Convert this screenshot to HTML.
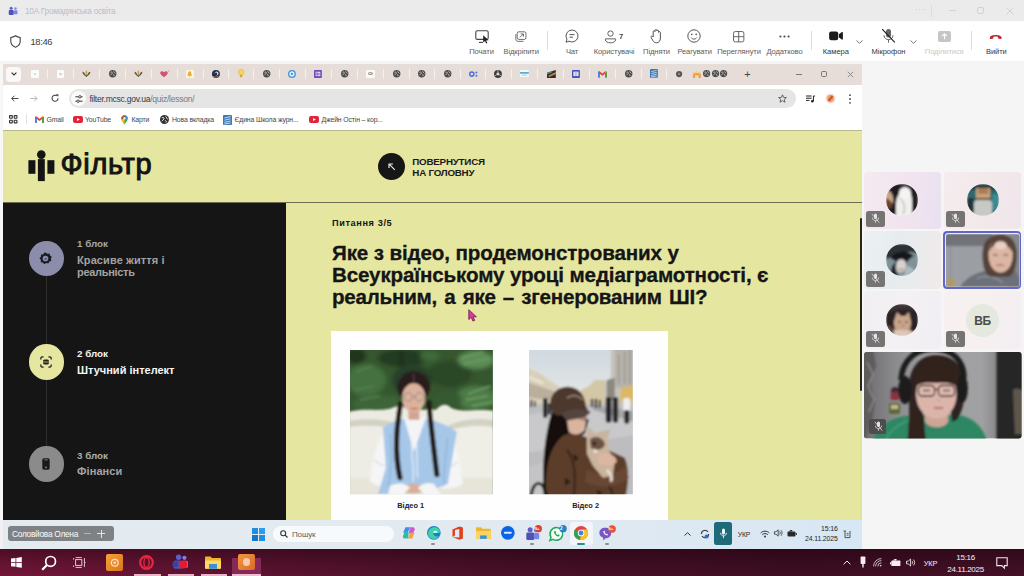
<!DOCTYPE html>
<html lang="uk">
<head>
<meta charset="utf-8">
<title>10А Громадянська освіта</title>
<style>
*{box-sizing:border-box;margin:0;padding:0}
html,body{width:1024px;height:576px;overflow:hidden;background:#f5f5f5;font-family:"Liberation Sans",sans-serif;}
div,svg,span{position:absolute}
span.i{position:static}
.c{transform:translate(-50%,-50%);white-space:nowrap}
.l{transform:translateY(-50%);white-space:nowrap}
.r{transform:translate(-100%,-50%);white-space:nowrap}
#titlebar{left:0;top:0;width:1024px;height:21px;background:#ebebeb}
#toolbar{left:0;top:21px;width:1024px;height:40px;background:#fff}
.tb{top:50.8px;font-size:7.6px;color:#5c5c5c;letter-spacing:-0.12px}
.tb2{top:50.9px;font-size:7.55px;color:#363636;letter-spacing:-0.05px}
.sep{width:1px;background:#dcdcdc;top:31px;height:19px}
.ic{overflow:visible}

.tile{width:77.5px;height:57.4px;border-radius:4px}
.mic{width:18.4px;height:15.8px;border-radius:2.5px;background:#767373}
.bm{top:119.4px;font-size:6.9px;color:#454545;letter-spacing:-0.15px}
.sb1{left:77px;font-size:9.8px;font-weight:700;letter-spacing:0px;margin-top:-0.4px}
.sb2{left:77px;font-size:11px;font-weight:700}
.hh{left:332px;font-size:20.6px;font-weight:700;color:#151515;letter-spacing:-0.25px;-webkit-text-stroke:0.3px #151515}
</style>
</head>
<body>
<!-- ===== Teams title bar ===== -->
<div id="titlebar"></div>
<svg class="ic" style="left:8px;top:6px" width="10.5" height="9.5" viewBox="0 0 14 12">
  <circle cx="4.2" cy="2.6" r="2" fill="#5b5fc7"/><circle cx="10" cy="3" r="1.6" fill="#7b83eb"/>
  <rect x="1" y="5" width="6.6" height="6.5" rx="1.2" fill="#4f52b2"/><rect x="8" y="5.2" width="4.6" height="5.6" rx="1.2" fill="#7b83eb"/>
</svg>
<div class="l" style="left:25px;top:11px;font-size:8.3px;color:#bcbccb;letter-spacing:-0.3px">10А Громадянська освіта</div>
<div class="c" style="left:920px;top:9px;font-size:10px;color:#d0d0d0;letter-spacing:0.5px">···</div>
<div style="left:931px;top:5px;width:1px;height:12px;background:#dcdcdc"></div>
<div style="left:949px;top:10px;width:7px;height:1px;background:#d2d2d2"></div>
<div style="left:977px;top:7px;width:7px;height:7px;border:1px solid #d2d2d2;border-radius:2px"></div>
<svg class="ic" style="left:1006px;top:7px" width="8" height="8" viewBox="0 0 8 8"><path d="M0.5 0.5L7.5 7.5M7.5 0.5L0.5 7.5" stroke="#d0d0d0" stroke-width="1" fill="none"/></svg>

<!-- ===== Teams toolbar ===== -->
<div id="toolbar"></div>
<svg class="ic" style="left:10px;top:35px" width="11" height="13" viewBox="0 0 11 13"><path d="M5.5 0.8C7 2 8.6 2.4 10.2 2.5V6.3C10.2 9.2 8.3 11.2 5.5 12.2C2.7 11.2 0.8 9.2 0.8 6.3V2.5C2.4 2.4 4 2 5.5 0.8Z" fill="none" stroke="#444" stroke-width="1.1"/></svg>
<div class="l" style="left:30.5px;top:41.2px;font-size:9.4px;color:#3a3a3a;letter-spacing:-0.35px">18:46</div>

<!-- Почати -->
<svg class="ic" style="left:475px;top:29.6px" width="15" height="14" viewBox="0 0 15 14"><rect x="0.8" y="0.8" width="12.4" height="8.6" rx="1.5" fill="none" stroke="#444" stroke-width="1.1"/><path d="M4 12.4H8" stroke="#444" stroke-width="1.1"/><path d="M8.2 5.2L13.6 10.2L11 10.4L12.4 13L11.2 13.5L10 10.9L8.2 12.4Z" fill="#222"/></svg>
<div class="tb c" style="left:481.5px">Почати</div>
<!-- Відкріпити -->
<svg class="ic" style="left:515.2px;top:30.8px" width="11.8" height="11.4" viewBox="0 0 14 13"><rect x="2.6" y="0.7" width="10.4" height="9" rx="2" fill="none" stroke="#555" stroke-width="1"/><path d="M1 3.5V9.5C1 11 2 12 3.5 12H10" fill="none" stroke="#555" stroke-width="1"/><path d="M6 7.2L9.8 3.4M6.8 3.2H10V6.4" fill="none" stroke="#555" stroke-width="1"/></svg>
<div class="tb c" style="left:521.2px">Відкріпити</div>
<div class="sep" style="left:547px"></div>
<!-- Чат -->
<svg class="ic" style="left:565px;top:29px" width="14" height="15" viewBox="0 0 14 15"><path d="M7 1A6 6 0 1 1 4 12.2L1 13.2L1.9 10.2A6 6 0 0 1 7 1Z" fill="none" stroke="#555" stroke-width="1"/><path d="M4.5 5.6H9.5M4.5 8.2H8" stroke="#555" stroke-width="1"/></svg>
<div class="tb c" style="left:572px">Чат</div>
<!-- Користувачі -->
<svg class="ic" style="left:604.4px;top:29.6px" width="13" height="14" viewBox="0 0 14 15"><circle cx="7" cy="3.8" r="2.9" fill="none" stroke="#555" stroke-width="1"/><path d="M1.5 9.5H12.5V10.5C12.5 12.5 10 13.8 7 13.8C4 13.8 1.5 12.5 1.5 10.5Z" fill="none" stroke="#555" stroke-width="1"/></svg>
<div class="c" style="left:621px;top:36px;font-size:7.6px;font-weight:700;color:#444">7</div>
<div class="tb c" style="left:614px">Користувачі</div>
<!-- Підняти -->
<svg class="ic" style="left:650px;top:28px" width="13" height="16" viewBox="0 0 13 16"><path d="M3.2 9V3.6C3.2 2.4 5 2.4 5 3.6V2.4C5 1.2 6.8 1.2 6.8 2.4V3C6.8 1.9 8.6 1.9 8.6 3V4.4C8.6 3.4 10.4 3.4 10.4 4.4V10C10.4 13 8.8 14.8 6.6 14.8C4.6 14.8 3.6 13.8 2.6 12.2L1 9.2C0.6 8.2 2 7.6 2.6 8.4Z" fill="none" stroke="#555" stroke-width="1"/></svg>
<div class="tb c" style="left:656.5px">Підняти</div>
<!-- Реагувати -->
<svg class="ic" style="left:687px;top:29px" width="14" height="14" viewBox="0 0 14 14"><circle cx="7" cy="7" r="6.2" fill="none" stroke="#555" stroke-width="1"/><circle cx="4.8" cy="5.4" r="0.8" fill="#555"/><circle cx="9.2" cy="5.4" r="0.8" fill="#555"/><path d="M4.2 8.6C5.6 10.6 8.4 10.6 9.8 8.6" fill="none" stroke="#555" stroke-width="1"/></svg>
<div class="tb c" style="left:694.6px">Реагувати</div>
<!-- Переглянути -->
<svg class="ic" style="left:733.2px;top:30.6px" width="11.4" height="11.4" viewBox="0 0 13 13"><rect x="0.6" y="0.6" width="11.8" height="11.8" rx="2" fill="none" stroke="#555" stroke-width="1"/><path d="M6.5 0.6V12.4M0.6 6.5H12.4" stroke="#555" stroke-width="1"/></svg>
<div class="tb c" style="left:739px">Переглянути</div>
<!-- Додатково -->
<svg class="ic" style="left:779px;top:34.9px" width="11" height="3" viewBox="0 0 11 3"><circle cx="1.4" cy="1.5" r="1.1" fill="#4a4a4a"/><circle cx="5.5" cy="1.5" r="1.1" fill="#4a4a4a"/><circle cx="9.6" cy="1.5" r="1.1" fill="#4a4a4a"/></svg>
<div class="tb c" style="left:784.5px">Додатково</div>
<div class="sep" style="left:811px"></div>
<!-- Камера -->
<svg class="ic" style="left:829.2px;top:31.2px" width="14.2" height="9.6" viewBox="0 0 16 11"><rect x="0" y="0.5" width="10.5" height="10" rx="2.5" fill="#1a1a1a"/><path d="M11.3 3.6L14.6 1.2C15.2 0.8 15.8 1.2 15.8 1.8V9.2C15.8 9.8 15.2 10.2 14.6 9.8L11.3 7.4Z" fill="#1a1a1a"/></svg>
<div class="tb2 c" style="left:835.8px">Камера</div>
<svg class="ic" style="left:856px;top:40px" width="7" height="4" viewBox="0 0 7 4"><path d="M0.5 0.5L3.5 3.3L6.5 0.5" fill="none" stroke="#666" stroke-width="0.9"/></svg>
<!-- Мікрофон -->
<svg class="ic" style="left:881px;top:28px" width="15" height="16" viewBox="0 0 15 16"><rect x="5" y="1" width="5" height="8.6" rx="2.5" fill="#666"/><path d="M3 7.2C3 10 5 11.6 7.5 11.6C10 11.6 12 10 12 7.2M7.5 11.6V14.6" fill="none" stroke="#666" stroke-width="1"/><path d="M1.2 1.2L13.8 14.4" stroke="#222" stroke-width="1.2"/></svg>
<div class="tb2 c" style="left:888.5px">Мікрофон</div>
<svg class="ic" style="left:910px;top:40px" width="7" height="4" viewBox="0 0 7 4"><path d="M0.5 0.5L3.5 3.3L6.5 0.5" fill="none" stroke="#666" stroke-width="0.9"/></svg>
<!-- Поділитися -->
<svg class="ic" style="left:938px;top:31px" width="13" height="11" viewBox="0 0 13 11"><rect x="0" y="0" width="13" height="11" rx="2" fill="#c6c6c6"/><path d="M6.5 8.3V3M4.2 5L6.5 2.8L8.8 5" fill="none" stroke="#fff" stroke-width="1.1"/></svg>
<div class="tb c" style="left:944.2px;color:#c8c8c8">Поділитися</div>
<div class="sep" style="left:971px"></div>
<!-- Вийти -->
<svg class="ic" style="left:989.4px;top:32.6px" width="13.4" height="6.8" viewBox="0 0 16 8"><path d="M1 5.2C1 1.2 15 1.2 15 5.2V6.4C15 7 14.5 7.3 14 7.2L11.6 6.7C11 6.6 10.8 6.2 10.8 5.7V4.6C9 3.9 7 3.9 5.2 4.6V5.7C5.2 6.2 5 6.6 4.4 6.7L2 7.2C1.5 7.3 1 7 1 6.4Z" fill="#c4262e"/></svg>
<div class="tb2 c" style="left:996.4px;font-size:7.5px">Вийти</div>

<!-- ===== Shared screen: Chrome window ===== -->
<div style="left:0;top:61px;width:862px;height:3px;background:#f5f5f5"></div>
<div style="left:0;top:64px;width:3px;height:484px;background:#f7f7f7"></div>
<div id="tabs" style="left:3px;top:64px;width:859px;height:21px;background:#e6ddd9"></div>
<div style="left:5.5px;top:66.5px;width:15.5px;height:15px;border-radius:4px;background:#fbf9f8"></div>
<svg class="ic" style="left:10.5px;top:72.2px" width="6" height="4" viewBox="0 0 6 4"><path d="M0.6 0.6L3 3L5.4 0.6" fill="none" stroke="#333" stroke-width="1.2"/></svg>
<div style="left:31.2px;top:69.8px;width:7.9px;height:7.9px;background:#fbfbfb;border-radius:1px"></div><div style="left:33.9px;top:72.5px;width:2.6px;height:2.6px;border-radius:2px;background:#c9d6d2"></div>
<div style="left:56.6px;top:69.8px;width:7.9px;height:7.9px;background:#fbfbfb;border-radius:1px"></div><div style="left:59.3px;top:72.5px;width:2.6px;height:2.6px;border-radius:2px;background:#c9d6d2"></div>
<svg class="ic" style="left:82.0px;top:70.3px" width="8.8" height="7.0" viewBox="0 0 10 8"><path d="M0.4 2C2 2.2 3.2 3.4 3.6 5L5 6L6.4 5C6.8 3.4 8 2.2 9.6 2C9.4 4.4 8 6 6.4 6.6L5 8L3.6 6.6C2 6 0.6 4.4 0.4 2Z" fill="#6b563a"/><path d="M5 0.2C6 1.4 6.2 3 5.8 4.6L5 5.4L4.2 4.6C3.8 3 4 1.4 5 0.2Z" fill="#c9a040"/><path d="M3.6 6L5 8L6.4 6L5 5.2Z" fill="#44705a"/></svg>
<svg class="ic" style="left:108.5px;top:70.1px" width="7.4" height="7.4" viewBox="0 0 10 10"><circle cx="5" cy="5" r="5" fill="#4a4a4a"/><path d="M2 3.2C3.4 2 4.8 3 4.4 4.4C4 5.8 2.4 5.6 2 7M6 1.4C7.6 2.4 7 4 8.6 4.6M5.4 6.4C6.6 6 7.6 7 6.8 8.4" stroke="#d8d8d8" stroke-width="1.1" fill="none"/></svg>
<svg class="ic" style="left:133.9px;top:70.3px" width="8.8" height="7.0" viewBox="0 0 10 8"><path d="M0.4 2C2 2.2 3.2 3.4 3.6 5L5 6L6.4 5C6.8 3.4 8 2.2 9.6 2C9.4 4.4 8 6 6.4 6.6L5 8L3.6 6.6C2 6 0.6 4.4 0.4 2Z" fill="#6b563a"/><path d="M5 0.2C6 1.4 6.2 3 5.8 4.6L5 5.4L4.2 4.6C3.8 3 4 1.4 5 0.2Z" fill="#c9a040"/><path d="M3.6 6L5 8L6.4 6L5 5.2Z" fill="#44705a"/></svg>
<svg class="ic" style="left:159.7px;top:70.3px" width="9.7" height="7.9" viewBox="0 0 11 9"><path d="M4.5 8.4C2 6.4 0.2 5 0.2 3.2C0.2 1.2 3 0.6 4.5 2.6C6 0.6 8.8 1.2 8.8 3.2C8.8 5 7 6.4 4.5 8.4Z" fill="#d4527a"/><circle cx="9.8" cy="1" r="0.8" fill="#e48aa6"/></svg>
<div style="left:186.0px;top:69.8px;width:7.9px;height:7.9px;background:#fdf6dc;border-radius:1px"></div><svg class="ic" style="left:187.4px;top:70.7px" width="5.3" height="6.2" viewBox="0 0 6 7"><path d="M3 0.2C4.4 0.2 4.8 1.6 4.8 3.2L5.8 5.4H0.2L1.2 3.2C1.2 1.6 1.6 0.2 3 0.2ZM2 6H4C4 7.2 2 7.2 2 6Z" fill="#e8a93a"/></svg>
<svg class="ic" style="left:212.0px;top:69.8px" width="7.9" height="7.9" viewBox="0 0 9 9"><circle cx="4.5" cy="4.5" r="4.5" fill="#1d2b4f"/><circle cx="5.2" cy="4" r="2.2" fill="#e8e8f0"/><circle cx="4.4" cy="4.6" r="1.7" fill="#1d2b4f"/><path d="M1 7C2.6 8.4 5.6 8.6 7.6 7" stroke="#d9892b" stroke-width="0.9" fill="none"/></svg>
<svg class="ic" style="left:237.9px;top:69.4px" width="6.2" height="8.8" viewBox="0 0 7 10"><circle cx="3.5" cy="3.5" r="3.2" fill="#f7d55a" stroke="#e0b432" stroke-width="0.6"/><rect x="2.2" y="6.6" width="2.6" height="2.8" rx="0.6" fill="#c9a84a"/></svg>
<svg class="ic" style="left:262.9px;top:70.1px" width="7.4" height="7.4" viewBox="0 0 10 10"><circle cx="5" cy="5" r="5" fill="#4a4a4a"/><path d="M2 3.2C3.4 2 4.8 3 4.4 4.4C4 5.8 2.4 5.6 2 7M6 1.4C7.6 2.4 7 4 8.6 4.6M5.4 6.4C6.6 6 7.6 7 6.8 8.4" stroke="#d8d8d8" stroke-width="1.1" fill="none"/></svg>
<svg class="ic" style="left:288.3px;top:69.8px" width="7.9" height="7.9" viewBox="0 0 9 9"><circle cx="4.5" cy="4.5" r="3.7" fill="#e8f3fb" stroke="#3b8fd6" stroke-width="1.5"/><circle cx="4.5" cy="4.5" r="1.3" fill="#3b8fd6"/></svg>
<svg class="ic" style="left:314.1px;top:69.8px" width="7.9" height="7.9" viewBox="0 0 9 9"><rect width="9" height="9" rx="1" fill="#7248b9"/><rect x="1.8" y="2" width="5.4" height="5" fill="#efe9fa"/><path d="M1.8 3.8H7.2M1.8 5.4H7.2M3.6 2V7" stroke="#7248b9" stroke-width="0.7"/></svg>
<svg class="ic" style="left:340.8px;top:70.1px" width="7.4" height="7.4" viewBox="0 0 10 10"><circle cx="5" cy="5" r="5" fill="#4a4a4a"/><path d="M2 3.2C3.4 2 4.8 3 4.4 4.4C4 5.8 2.4 5.6 2 7M6 1.4C7.6 2.4 7 4 8.6 4.6M5.4 6.4C6.6 6 7.6 7 6.8 8.4" stroke="#d8d8d8" stroke-width="1.1" fill="none"/></svg>
<div style="left:365.8px;top:69.8px;width:8.8px;height:7.9px;background:#fafaf5;border-radius:1px"></div><div style="left:367.6px;top:72.2px;width:5.3px;height:3.2px;border-radius:50%;border:0.9px solid #9a9a84;background:#e6e6d2"></div>
<svg class="ic" style="left:392.6px;top:70.1px" width="7.4" height="7.4" viewBox="0 0 10 10"><circle cx="5" cy="5" r="5" fill="#4a4a4a"/><path d="M2 3.2C3.4 2 4.8 3 4.4 4.4C4 5.8 2.4 5.6 2 7M6 1.4C7.6 2.4 7 4 8.6 4.6M5.4 6.4C6.6 6 7.6 7 6.8 8.4" stroke="#d8d8d8" stroke-width="1.1" fill="none"/></svg>
<svg class="ic" style="left:418.1px;top:70.1px" width="7.4" height="7.4" viewBox="0 0 10 10"><circle cx="5" cy="5" r="5" fill="#4a4a4a"/><path d="M2 3.2C3.4 2 4.8 3 4.4 4.4C4 5.8 2.4 5.6 2 7M6 1.4C7.6 2.4 7 4 8.6 4.6M5.4 6.4C6.6 6 7.6 7 6.8 8.4" stroke="#d8d8d8" stroke-width="1.1" fill="none"/></svg>
<svg class="ic" style="left:443.9px;top:70.1px" width="7.4" height="7.4" viewBox="0 0 10 10"><circle cx="5" cy="5" r="5" fill="#4a4a4a"/><path d="M2 3.2C3.4 2 4.8 3 4.4 4.4C4 5.8 2.4 5.6 2 7M6 1.4C7.6 2.4 7 4 8.6 4.6M5.4 6.4C6.6 6 7.6 7 6.8 8.4" stroke="#d8d8d8" stroke-width="1.1" fill="none"/></svg>
<svg class="ic" style="left:469.0px;top:70.7px" width="8.8" height="6.2" viewBox="0 0 10 7"><circle cx="3.2" cy="3.5" r="2.4" fill="none" stroke="#3f6fd8" stroke-width="1.6"/><circle cx="8.4" cy="1.6" r="1.1" fill="#3f6fd8"/><circle cx="8.4" cy="5.4" r="1.1" fill="#3f6fd8"/></svg>
<svg class="ic" style="left:494.3px;top:69.8px" width="7.9" height="7.9" viewBox="0 0 9 9"><circle cx="4.5" cy="4.5" r="4.5" fill="#3c3c3c"/><circle cx="4.5" cy="4.5" r="1.7" fill="#d9d9d9"/><path d="M4.5 0V2.8M0.6 6.8L3 5.4M8.4 6.8L6 5.4" stroke="#d9d9d9" stroke-width="0.8"/></svg>
<svg class="ic" style="left:520.2px;top:70.3px" width="8.8" height="7.0" viewBox="0 0 10 8"><rect width="10" height="8" rx="1" fill="#f2f8fb"/><rect x="0" y="2.4" width="10" height="1.8" fill="#4fa3c7"/><rect x="2" y="5.4" width="6" height="1" fill="#9cc9dc"/></svg>
<svg class="ic" style="left:546.6px;top:69.8px" width="8.8" height="7.9" viewBox="0 0 10 9"><path d="M0 3L10 0V9H0Z" fill="#2b2f33"/><path d="M2 6.4L10 2.4V4.6L2 8.2Z" fill="#d9822b"/><path d="M0 3.2L6 1.4L6 2.6L0 5Z" fill="#4f8f9b"/></svg>
<svg class="ic" style="left:572.2px;top:69.8px" width="7.9" height="7.9" viewBox="0 0 9 9"><rect width="9" height="9" rx="1" fill="#3f51b5"/><rect x="1.6" y="2" width="5.8" height="5" fill="#e8eaf6"/><rect x="1.6" y="2" width="5.8" height="1.6" fill="#c5cae9"/><path d="M4.5 3.6V7" stroke="#3f51b5" stroke-width="0.7"/></svg>
<svg class="ic" style="left:598.4px;top:70.8px" width="8.8" height="6.6" viewBox="0 0 10 7.5"><path d="M0 7.5V0.8L1.4 0L5 2.8L8.6 0L10 0.8V7.5H8V3.2L5 5.4L2 3.2V7.5Z" fill="#ea4335"/><path d="M0 7.5V0.8L2 2.2V7.5Z" fill="#4285f4"/><path d="M10 7.5V0.8L8 2.2V7.5Z" fill="#34a853"/><path d="M8 2.2L10 0.8L8.6 0Z" fill="#fbbc04"/></svg>
<svg class="ic" style="left:624.7px;top:70.1px" width="7.4" height="7.4" viewBox="0 0 10 10"><circle cx="5" cy="5" r="5" fill="#4a4a4a"/><path d="M2 3.2C3.4 2 4.8 3 4.4 4.4C4 5.8 2.4 5.6 2 7M6 1.4C7.6 2.4 7 4 8.6 4.6M5.4 6.4C6.6 6 7.6 7 6.8 8.4" stroke="#d8d8d8" stroke-width="1.1" fill="none"/></svg>
<svg class="ic" style="left:650.4px;top:69.4px" width="7.9" height="8.8" viewBox="0 0 9 10"><rect width="9" height="10" rx="1" fill="#3f78b5"/><path d="M1.4 3L7.6 1.6M1.4 5.2L7.6 3.8M1.4 7.4L7.6 6M1.4 9L7.6 8" stroke="#cfe2f3" stroke-width="0.9"/></svg>
<svg class="ic" style="left:675.8px;top:70.7px" width="6.2" height="6.2" viewBox="0 0 7 7"><circle cx="3.5" cy="3.5" r="3.5" fill="#555"/><circle cx="3.5" cy="3.5" r="1.4" fill="#8a8a8a"/></svg>
<div style="left:47.4px;top:69px;width:1px;height:10px;background:#f6f1ee"></div>
<div style="left:73.0px;top:69px;width:1px;height:10px;background:#f6f1ee"></div>
<div style="left:98.8px;top:69px;width:1px;height:10px;background:#f6f1ee"></div>
<div style="left:124.8px;top:69px;width:1px;height:10px;background:#f6f1ee"></div>
<div style="left:150.7px;top:69px;width:1px;height:10px;background:#f6f1ee"></div>
<div style="left:176.5px;top:69px;width:1px;height:10px;background:#f6f1ee"></div>
<div style="left:202.5px;top:69px;width:1px;height:10px;background:#f6f1ee"></div>
<div style="left:228.0px;top:69px;width:1px;height:10px;background:#f6f1ee"></div>
<div style="left:253.3px;top:69px;width:1px;height:10px;background:#f6f1ee"></div>
<div style="left:279.0px;top:69px;width:1px;height:10px;background:#f6f1ee"></div>
<div style="left:304.7px;top:69px;width:1px;height:10px;background:#f6f1ee"></div>
<div style="left:330.8px;top:69px;width:1px;height:10px;background:#f6f1ee"></div>
<div style="left:356.9px;top:69px;width:1px;height:10px;background:#f6f1ee"></div>
<div style="left:382.8px;top:69px;width:1px;height:10px;background:#f6f1ee"></div>
<div style="left:408.6px;top:69px;width:1px;height:10px;background:#f6f1ee"></div>
<div style="left:434.2px;top:69px;width:1px;height:10px;background:#f6f1ee"></div>
<div style="left:460.0px;top:69px;width:1px;height:10px;background:#f6f1ee"></div>
<div style="left:485.4px;top:69px;width:1px;height:10px;background:#f6f1ee"></div>
<div style="left:511.0px;top:69px;width:1px;height:10px;background:#f6f1ee"></div>
<div style="left:537.3px;top:69px;width:1px;height:10px;background:#f6f1ee"></div>
<div style="left:563.1px;top:69px;width:1px;height:10px;background:#f6f1ee"></div>
<div style="left:589.0px;top:69px;width:1px;height:10px;background:#f6f1ee"></div>
<div style="left:615.1px;top:69px;width:1px;height:10px;background:#f6f1ee"></div>
<div style="left:640.9px;top:69px;width:1px;height:10px;background:#f6f1ee"></div>
<div style="left:666.1px;top:69px;width:1px;height:10px;background:#f6f1ee"></div>
<svg class="ic" style="left:691.7px;top:69.6px" width="9.7" height="8.8" viewBox="0 0 11 10"><path d="M1 9V5C1 1 10 1 10 5V9H7.4V6H3.6V9Z" fill="#f0a03a"/><path d="M2 4.2C3 2.2 8 2.2 9 4.2" stroke="#fff3d6" stroke-width="0.8" fill="none"/></svg>
<svg class="ic" style="left:702.9px;top:70.2px" width="7.2" height="7.2" viewBox="0 0 10 10"><circle cx="5" cy="5" r="5" fill="#4a4a4a"/><path d="M2 3.2C3.4 2 4.8 3 4.4 4.4C4 5.8 2.4 5.6 2 7M6 1.4C7.6 2.4 7 4 8.6 4.6M5.4 6.4C6.6 6 7.6 7 6.8 8.4" stroke="#d8d8d8" stroke-width="1.1" fill="none"/></svg>
<svg class="ic" style="left:711.6px;top:70.2px" width="7.2" height="7.2" viewBox="0 0 10 10"><circle cx="5" cy="5" r="5" fill="#4a4a4a"/><path d="M2 3.2C3.4 2 4.8 3 4.4 4.4C4 5.8 2.4 5.6 2 7M6 1.4C7.6 2.4 7 4 8.6 4.6M5.4 6.4C6.6 6 7.6 7 6.8 8.4" stroke="#d8d8d8" stroke-width="1.1" fill="none"/></svg>
<svg class="ic" style="left:720.3px;top:70.2px" width="7.2" height="7.2" viewBox="0 0 10 10"><circle cx="5" cy="5" r="5" fill="#4a4a4a"/><path d="M2 3.2C3.4 2 4.8 3 4.4 4.4C4 5.8 2.4 5.6 2 7M6 1.4C7.6 2.4 7 4 8.6 4.6M5.4 6.4C6.6 6 7.6 7 6.8 8.4" stroke="#d8d8d8" stroke-width="1.1" fill="none"/></svg>
<div class="c" style="left:747.5px;top:73.5px;font-size:11px;color:#444">+</div>
<div style="left:796px;top:73.5px;width:6px;height:1px;background:#777"></div>
<div style="left:820.5px;top:71px;width:6px;height:6px;border:1px solid #777;border-radius:1.5px"></div>
<svg class="ic" style="left:846.5px;top:70.5px" width="7" height="7" viewBox="0 0 7 7"><path d="M0.8 0.8L6.2 6.2M6.2 0.8L0.8 6.2" stroke="#777" stroke-width="0.8" fill="none"/></svg>

<!-- address row -->
<div style="left:3px;top:85px;width:859px;height:45px;background:#fff;border-top-left-radius:4px"></div>
<svg class="ic" style="left:10.6px;top:95px" width="7.8" height="7" viewBox="0 0 9 8"><path d="M8.6 4H1M4 0.8L0.8 4L4 7.2" fill="none" stroke="#3c3c3c" stroke-width="1.1"/></svg>
<svg class="ic" style="left:30.4px;top:95px" width="7.8" height="7" viewBox="0 0 9 8"><path d="M0.4 4H8M5 0.8L8.2 4L5 7.2" fill="none" stroke="#b4b4b4" stroke-width="1.1"/></svg>
<svg class="ic" style="left:50.6px;top:94.2px" width="8.4" height="8.4" viewBox="0 0 10 10"><path d="M8.4 5A3.6 3.6 0 1 1 7 2.2" fill="none" stroke="#3c3c3c" stroke-width="1.2"/><path d="M5.8 0.4H8.8V3.4Z" fill="#3c3c3c"/></svg>
<div style="left:69px;top:89px;width:727px;height:18.5px;border-radius:9.5px;background:#e5e5e6"></div>
<div style="left:71px;top:91px;width:15px;height:14.5px;border-radius:7.5px;background:#fbfbfb"></div>
<svg class="ic" style="left:74.5px;top:94.5px" width="8" height="8" viewBox="0 0 8 8"><path d="M0.4 1.8H3.6M6.2 1.8H7.6M0.4 6.2H1.8M4.4 6.2H7.6" stroke="#333" stroke-width="1"/><circle cx="4.9" cy="1.8" r="1.2" fill="none" stroke="#333" stroke-width="0.9"/><circle cx="3.1" cy="6.2" r="1.2" fill="none" stroke="#333" stroke-width="0.9"/></svg>
<div class="l" id="url" style="left:89.5px;top:98.6px;font-size:8.6px;color:#3a3a3a;letter-spacing:-0.28px">filter.mcsc.gov.ua<span class="i" style="color:#7a7a7a">/quiz/lesson/</span></div>
<svg class="ic" style="left:777.5px;top:94px" width="9" height="9" viewBox="0 0 9 9"><path d="M4.5 0.8L5.6 3.4L8.4 3.6L6.3 5.4L7 8.2L4.5 6.7L2 8.2L2.7 5.4L0.6 3.6L3.4 3.4Z" fill="none" stroke="#444" stroke-width="0.8"/></svg>
<svg class="ic" style="left:805.5px;top:94.5px" width="9" height="8" viewBox="0 0 9 8"><path d="M0 1H5.6M0 3.2H5.6M0 5.4H3.4" stroke="#222" stroke-width="1"/><path d="M7.4 1V6" stroke="#222" stroke-width="1"/><circle cx="6.3" cy="6.2" r="1.3" fill="#222"/><path d="M7.4 1H9" stroke="#222" stroke-width="1"/></svg>
<svg class="ic" style="left:824.5px;top:93px" width="11" height="11" viewBox="0 0 11 11"><circle cx="5.5" cy="5.5" r="5" fill="#f7ddd0"/><circle cx="5.5" cy="5.5" r="3.4" fill="#ee9b6b"/><path d="M3.6 7.8L7.6 3" stroke="#d2521f" stroke-width="2"/></svg>
<svg class="ic" style="left:849px;top:94px" width="2" height="10" viewBox="0 0 2 10"><circle cx="1" cy="1.2" r="0.9" fill="#444"/><circle cx="1" cy="5" r="0.9" fill="#444"/><circle cx="1" cy="8.8" r="0.9" fill="#444"/></svg>

<!-- bookmarks row -->
<svg class="ic" style="left:8.5px;top:115px" width="8.5" height="8.5" viewBox="0 0 9 9"><rect x="0.6" y="0.6" width="2.9" height="2.9" rx="0.5" fill="none" stroke="#333" stroke-width="1.2"/><rect x="5.5" y="0.6" width="2.9" height="2.9" rx="0.5" fill="none" stroke="#333" stroke-width="1.2"/><rect x="0.6" y="5.5" width="2.9" height="2.9" rx="0.5" fill="none" stroke="#333" stroke-width="1.2"/><rect x="5.5" y="5.5" width="2.9" height="2.9" rx="0.5" fill="none" stroke="#333" stroke-width="1.2"/></svg>
<div style="left:25.5px;top:114px;width:1px;height:10px;background:#e2e2e2"></div>
<svg class="ic" style="left:34.5px;top:116px" width="9" height="7" viewBox="0 0 10 7.5"><path d="M0 7.5V0.8L1.4 0L5 2.8L8.6 0L10 0.8V7.5H8V3.2L5 5.4L2 3.2V7.5Z" fill="#ea4335"/><path d="M0 7.5V0.8L2 2.2V7.5Z" fill="#4285f4"/><path d="M10 7.5V0.8L8 2.2V7.5Z" fill="#34a853"/><path d="M8 2.2L10 0.8L8.6 0Z" fill="#fbbc04"/></svg>
<div class="bm l" style="left:46.5px">Gmail</div>
<svg class="ic" style="left:72.5px;top:116px" width="10" height="7" viewBox="0 0 10 7"><rect width="10" height="7" rx="2" fill="#e0243a"/><path d="M4 2L6.8 3.5L4 5Z" fill="#fff"/></svg>
<div class="bm l" style="left:85px">YouTube</div>
<svg class="ic" style="left:120.5px;top:114.5px" width="7" height="10" viewBox="0 0 7 10"><path d="M3.5 0.2C5.4 0.2 6.8 1.6 6.8 3.4C6.8 5.4 4.6 7 3.5 9.8C2.4 7 0.2 5.4 0.2 3.4C0.2 1.6 1.6 0.2 3.5 0.2Z" fill="#34a853"/><path d="M3.5 0.2C5.4 0.2 6.8 1.6 6.8 3.4L3.5 3.4Z" fill="#4285f4"/><path d="M0.2 3.4C0.2 1.6 1.6 0.2 3.5 0.2V3.4Z" fill="#ea4335"/><path d="M0.4 4.4L3.5 3.4L3.5 9.8C2.6 7.6 1 6.2 0.4 4.4Z" fill="#fbbc04"/><circle cx="3.5" cy="3.4" r="1.1" fill="#fff"/></svg>
<div class="bm l" style="left:131.5px">Карти</div>
<svg class="ic" style="left:160px;top:115px" width="9" height="9" viewBox="0 0 10 10"><circle cx="5" cy="5" r="5" fill="#333"/><path d="M2 3.2C3.4 2 4.8 3 4.4 4.4C4 5.8 2.4 5.6 2 7M6 1.4C7.6 2.4 7 4 8.6 4.6M5.4 6.4C6.6 6 7.6 7 6.8 8.4" stroke="#e4e4e4" stroke-width="1.1" fill="none"/></svg>
<div class="bm l" style="left:172px">Нова вкладка</div>
<svg class="ic" style="left:222.5px;top:114.5px" width="9" height="10" viewBox="0 0 9 10"><rect width="9" height="10" rx="1" fill="#3f78b5"/><path d="M1.4 3L7.6 1.6M1.4 5.2L7.6 3.8M1.4 7.4L7.6 6M1.4 9L7.6 8" stroke="#cfe2f3" stroke-width="0.9"/></svg>
<div class="bm l" style="left:234.5px">Єдина Школа журн...</div>
<svg class="ic" style="left:309px;top:116px" width="10" height="7" viewBox="0 0 10 7"><rect width="10" height="7" rx="2" fill="#e0243a"/><path d="M4 2L6.8 3.5L4 5Z" fill="#fff"/></svg>
<div class="bm l" style="left:321.5px">Джейн Остін – кор...</div>

<!-- ===== Web page ===== -->
<div id="page" style="left:3px;top:130px;width:859px;height:390.2px;background:#e5e6a0"></div>
<div style="left:3px;top:129.5px;width:859px;height:1px;background:#b9ba8c"></div>
<!-- logo -->
<svg class="ic" style="left:28.4px;top:150px" width="26.4" height="31.6" viewBox="0 0 26.4 31.6"><circle cx="13.3" cy="4.6" r="4.3" fill="#141414"/><rect x="9.9" y="9.1" width="6.9" height="22" fill="#141414"/><rect x="0.4" y="10.2" width="7" height="13.6" fill="#141414"/><rect x="19.4" y="10.2" width="7" height="13.6" fill="#141414"/></svg>
<div id="logo" class="l" style="left:60.6px;top:163.9px;font-size:29px;color:#141414;letter-spacing:0.65px;-webkit-text-stroke:1px #141414">Фільтр</div>
<!-- back button -->
<div style="left:378.2px;top:152.8px;width:27px;height:27px;border-radius:50%;background:#161616"></div>
<svg class="ic" style="left:388px;top:163px" width="7.5" height="7.5" viewBox="0 0 7.5 7.5"><path d="M6.8 6.8L1.2 1.2M1 5V1H5" fill="none" stroke="#e8e8e8" stroke-width="1.2"/></svg>
<div id="back1" class="l" style="left:412.3px;top:161px;font-size:9.8px;font-weight:700;color:#1a1a1a;letter-spacing:-0.24px">ПОВЕРНУТИСЯ</div>
<div id="back2" class="l" style="left:412.3px;top:171.7px;font-size:9.8px;font-weight:700;color:#1a1a1a;letter-spacing:-0.24px">НА ГОЛОВНУ</div>
<!-- header line -->
<div style="left:3px;top:202px;width:859px;height:1px;background:#6d6d52"></div>
<!-- sidebar -->
<div id="side" style="left:3px;top:202.6px;width:283px;height:317.5px;background:#151515"></div>
<div style="left:45.8px;top:275px;width:1px;height:173px;background:#2d2d2d"></div>
<div style="left:28.6px;top:240.8px;width:35.3px;height:35.3px;border-radius:50%;background:#8b8dab"></div>
<svg class="ic" style="left:39.4px;top:251.9px" width="13" height="13" viewBox="0 0 12 12"><path d="M6 0.4L7.6 1.6L9.6 1.4L10.2 3.2L11.8 4.4L11 6.2L11.4 8.2L9.6 8.8L8.6 10.6L6.6 10.2L4.8 11.4L3.6 9.8L1.6 9.4L1.8 7.4L0.4 5.8L1.8 4.4L1.8 2.4L3.8 2.2L4.8 0.6Z" fill="#1b1b24"/><circle cx="6" cy="6" r="2.6" fill="#8b8dab"/><path d="M5 7L5.6 5.4L6.4 6.2L7 5.2L7.2 7Z" fill="#3a3a4a"/></svg>
<div class="sb1 l" style="top:243.6px;color:#a6a6a6">1 блок</div>
<div class="sb2 l" id="s1a" style="letter-spacing:0.1px;top:260.2px;color:#a3a3a3">Красиве життя і</div>
<div class="sb2 l" id="s1b" style="letter-spacing:-0.3px;top:272px;color:#a3a3a3">реальність</div>
<div style="left:28.6px;top:344.4px;width:35.3px;height:35.3px;border-radius:50%;background:#e5e6a0"></div>
<svg class="ic" style="left:40.2px;top:356px" width="12" height="12" viewBox="0 0 12 12"><path d="M0.8 3.6V2.4C0.8 1.4 1.4 0.8 2.4 0.8H3.6M8.4 0.8H9.6C10.6 0.8 11.2 1.4 11.2 2.4V3.6M11.2 8.4V9.6C11.2 10.6 10.6 11.2 9.6 11.2H8.4M3.6 11.2H2.4C1.4 11.2 0.8 10.6 0.8 9.6V8.4" fill="none" stroke="#222" stroke-width="1.3"/><rect x="3" y="3.6" width="6" height="4.8" rx="1.6" fill="#222"/><path d="M3 6H9" stroke="#e5e69d" stroke-width="0.7"/></svg>
<div class="sb1 l" style="top:353.8px;color:#f4f4f4">2 блок</div>
<div class="sb2 l" id="s2" style="letter-spacing:0px;top:369.8px;color:#f6f6f6">Штучний інтелект</div>
<div style="left:28.6px;top:446.4px;width:35.3px;height:35.3px;border-radius:50%;background:#8b8b8b"></div>
<svg class="ic" style="left:42.2px;top:458px" width="8" height="12" viewBox="0 0 8 12"><rect x="0.3" y="0.3" width="7.4" height="11.4" rx="1.6" fill="#1a1a1a"/><rect x="2.4" y="1.4" width="3.2" height="0.9" fill="#8b8b8b"/><circle cx="4" cy="9.4" r="0.9" fill="#8b8b8b"/></svg>
<div class="sb1 l" style="top:455.3px;color:#adadad">3 блок</div>
<div class="sb2 l" id="s3" style="letter-spacing:0.1px;top:471.3px;color:#a4a4a4">Фінанси</div>
<!-- question -->
<div id="q" class="l" style="left:332px;top:222.6px;font-size:9.2px;font-weight:700;color:#161616;letter-spacing:0.6px">Питання 3/5</div>
<div class="hh l" id="h1" style="top:253px;letter-spacing:-0.13px">Яке з відео, продемонстрованих у</div>
<div class="hh l" id="h2" style="top:275px;letter-spacing:-0.14px">Всеукраїнському уроці медіаграмотності, є</div>
<div class="hh l" id="h3" style="top:297px;word-spacing:1.73px">реальним, а яке – згенерованим ШІ?</div>
<!-- mouse cursor -->
<svg class="ic" style="left:467.6px;top:309px" width="9.4" height="13" viewBox="0 0 10 14"><path d="M0.8 0.8V11.4L3.4 9L5.2 13L7.2 12.2L5.4 8.4H9Z" fill="#d63aa6" stroke="#6a1045" stroke-width="0.8"/></svg>
<!-- card -->
<div id="card" style="left:331px;top:331px;width:336.5px;height:189.2px;background:#fefefe"></div>
<!-- photo 1 -->
<svg class="ic" style="left:349.8px;top:349.8px" width="142.8" height="144.2" viewBox="0 0 143 144.5">
  <defs>
    <filter id="b1" x="-5%" y="-5%" width="110%" height="110%"><feGaussianBlur stdDeviation="0.9"/></filter>
    <filter id="b2" x="-10%" y="-10%" width="120%" height="120%"><feGaussianBlur stdDeviation="2"/></filter>
    <filter id="b3" x="-10%" y="-10%" width="120%" height="120%"><feGaussianBlur stdDeviation="1.2"/></filter>
    <clipPath id="cp1"><rect width="143" height="144.5"/></clipPath>
  </defs>
  <g clip-path="url(#cp1)">
    <rect width="143" height="144.5" fill="#35562f"/>
    <g filter="url(#b2)"><rect x="-10" y="-10" width="163" height="90" fill="#35562f"/>
      <ellipse cx="16" cy="30" rx="20" ry="16" fill="#44703f"/><ellipse cx="52" cy="8" rx="24" ry="9" fill="#243a20"/>
      <ellipse cx="100" cy="24" rx="22" ry="13" fill="#2b4628"/><ellipse cx="126" cy="48" rx="20" ry="12" fill="#4d7c46"/>
      <ellipse cx="126" cy="10" rx="18" ry="9" fill="#5c8d55"/><ellipse cx="28" cy="54" rx="26" ry="9" fill="#3d6539"/>
      <ellipse cx="98" cy="50" rx="14" ry="9" fill="#365a33"/><rect x="50" y="0" width="3" height="26" fill="#1d2a18"/>
      <ellipse cx="6" cy="6" rx="10" ry="8" fill="#22361e"/><ellipse cx="80" cy="6" rx="10" ry="5" fill="#3f6a3a"/>
      <ellipse cx="62" cy="30" rx="20" ry="16" fill="#27402a"/>
    </g>
    <g filter="url(#b3)">
      <path d="M112 8L134 2M114 14L140 8M118 44L141 36M116 50L138 46M122 56L143 52" stroke="#6a9a63" stroke-width="2.6" fill="none" opacity="0.75"/>
      <path d="M6 22L22 16M4 40L24 36M10 50L30 46" stroke="#527f4c" stroke-width="2.6" fill="none" opacity="0.7"/>
    </g>
    <g filter="url(#b1)">
      <!-- sofa -->
      <path d="M-8 64C10 57 25 62 40 59C48 55 54 56 60 60H86C91 54 97 53 101 58C112 64 128 57 151 62V152H-8Z" fill="#ecebe2"/>
      <path d="M-8 72C16 67 36 70 50 74L52 80C36 76 16 74 -8 78Z" fill="#d3d1c4"/><path d="M151 72C128 66 110 70 98 76L96 82C110 76 128 74 151 78Z" fill="#d3d1c4"/>
      <path d="M-8 80C20 74 40 78 50 82V152H-8Z" fill="#eeede5"/><path d="M151 80C125 74 108 78 96 84V152H151Z" fill="#efeee7"/>
      <path d="M-8 128H151V152H-8Z" fill="#e7e5da"/>
      <!-- shirt / sleeves -->
      <path d="M40 78C28 84 22 110 20 132C30 138 40 140 52 136L58 96Z" fill="#f5f5f7"/>
      <path d="M92 78C106 84 110 112 113 134C104 140 92 140 82 136L76 96Z" fill="#f5f5f7"/>
      <path d="M24 110C30 116 38 118 44 116M108 112C102 118 94 120 88 118" stroke="#d9dbe2" stroke-width="1.2" fill="none"/>
      <!-- vest -->
      <path d="M33 78C42 71 54 68 64 68C78 68 92 72 107 82L98 134C86 142 44 144.5 28 144.5L36 118Z" fill="#a6c7e8"/>
      <path d="M40 84C42 100 42 120 38 138M98 88C96 104 94 120 94 134" stroke="#8fb4da" stroke-width="1.4" fill="none"/>
      <path d="M54 68L64 102L76 68Z" fill="#f4f4f6"/>
      <path d="M62 90C61 110 65 120 63 132M66 90C68 104 66 116 68 128" stroke="#eef2f8" stroke-width="1.2" fill="none"/>
      <!-- neck & head -->
      <rect x="58.5" y="56" width="11" height="14" fill="#d2a48f"/>
      <ellipse cx="63.8" cy="37" rx="16" ry="15.5" fill="#2a1f1e"/>
      <ellipse cx="63.8" cy="48" rx="11.6" ry="14.6" fill="#dcb29c"/>
      <path d="M49.5 45C50 30 58 25.5 63.8 25.5C70 25.5 77.5 30 78.5 45C75 36 69 32 63.8 32C58 32 53 36 49.5 45Z" fill="#2a1f1e"/>
      <path d="M63.8 24V32" stroke="#6d5a56" stroke-width="0.7"/>
      <circle cx="58.4" cy="47" r="4.2" fill="none" stroke="#857c86" stroke-width="0.9"/><circle cx="69.6" cy="47" r="4.2" fill="none" stroke="#857c86" stroke-width="0.9"/><path d="M62.6 47H65.4" stroke="#857c86" stroke-width="0.7"/>
      <path d="M60.6 58C62.6 59.2 65.6 59.2 67.6 58" stroke="#b2635b" stroke-width="1.3" fill="none"/>
      <!-- braids -->
      <path d="M50.5 54C47 76 44 100 50 128" stroke="#241a19" stroke-width="5.2" fill="none" stroke-linecap="round"/>
      <path d="M79 53C81 76 84 100 87 125" stroke="#241a19" stroke-width="5.2" fill="none" stroke-linecap="round"/>
      <!-- hands -->
      <ellipse cx="63" cy="139" rx="12" ry="5" fill="#d9ae98"/>
      <path d="M40 136C50 132 56 134 60 138L52 146H38Z" fill="#f5f5f7"/><path d="M84 134C78 132 72 134 68 138L76 146H92Z" fill="#f5f5f7"/>
    </g>
  </g>
</svg>
<!-- photo 2 -->
<svg class="ic" style="left:529.4px;top:349.8px" width="103.7" height="144.2" viewBox="0 0 104 144.5">
  <defs><clipPath id="cp2"><rect width="104" height="144.5"/></clipPath><linearGradient id="sky" x1="0" y1="0" x2="0" y2="1"><stop offset="0" stop-color="#cdd7df"/><stop offset="1" stop-color="#e6e8e6"/></linearGradient></defs>
  <g clip-path="url(#cp2)">
    <rect width="104" height="144.5" fill="#bcbcbd"/>
    <g filter="url(#b1)">
      <rect x="-8" y="-8" width="120" height="160" fill="#bcbcbd"/><rect x="-8" y="-8" width="120" height="62" fill="url(#sky)"/>
      <path d="M-8 15L12 24L20 30L32 38V56H-8Z" fill="#d8cfb9"/><path d="M-8 30L30 43V52L-8 46Z" fill="#b9af9c"/><path d="M-8 24L14 33" stroke="#efe9d8" stroke-width="2"/>
      <path d="M52 40L60 36L66 30H76V56H52Z" fill="#d3c8a6"/>
      <path d="M112 -8H82V28L76 32V56H112Z" fill="#c6c3ba"/>
      <path d="M86 -8H112V38H86Z" fill="#b7b4ad"/><path d="M90 4V34M96 2V34M101 0V34" stroke="#9b9892" stroke-width="1.6"/>
      <path d="M92 38L112 34V52H92Z" fill="#dcb865"/><path d="M78 30L86 28V50H78Z" fill="#8b8880"/>
      <path d="M-8 54H112V152H-8Z" fill="#bdbdbf"/>
      <path d="M-8 66L44 58L112 62V84L-8 104Z" fill="#c9c9cb"/>
      <path d="M64 56L112 62V74L64 60Z" fill="#a7a6a6"/>
      <path d="M-8 120L30 108V152H-8Z" fill="#c4c4c6"/>
      <!-- background people -->
      <rect x="14" y="48" width="4.6" height="20" rx="2.2" fill="#26262a"/><rect x="19" y="53" width="3" height="12" rx="1.5" fill="#38383c"/>
      <rect x="1" y="50" width="2.4" height="7" fill="#55504c"/><rect x="5" y="51" width="2" height="6" fill="#5c5652"/>
      <rect x="77" y="47" width="5.6" height="26" rx="2.4" fill="#232327"/><rect x="84" y="47" width="5.4" height="26" rx="2.4" fill="#29272b"/>
      <rect x="94.5" y="48" width="7" height="14" rx="2.4" fill="#efeeed"/><rect x="95.6" y="60" width="5" height="14" rx="2" fill="#28282c"/>
      <rect x="62" y="49" width="2.4" height="8" fill="#45423f"/><rect x="66" y="49" width="2.4" height="9" fill="#3c3a38"/><rect x="70" y="50" width="2.2" height="8" fill="#4a4744"/>
      <!-- hair -->
      <path d="M24 58C17 80 12 110 15 152H34L42 90L56 84L60 70L36 60Z" fill="#16110f"/>
      <!-- coat -->
      <path d="M34 86C46 80 58 86 70 96L96 108C101 120 100 134 96 152H18C15 124 18 100 34 86Z" fill="#5c3e2c"/>
      <path d="M38 100C46 110 48 128 44 152M68 122C78 130 84 140 86 152" stroke="#3d281d" stroke-width="2.5" fill="none"/>
      <path d="M58 120C70 126 86 128 97 116L100 128C88 140 70 138 56 132Z" fill="#694735"/>
      <path d="M44 104L50 108L46 112ZM36 128L42 132L36 136ZM68 140L74 143L69 147Z" fill="#2b1c15"/>
      <!-- face -->
      <path d="M37 64C44 62 54 62 58 66L56 80C52 86 44 86 40 82Z" fill="#d9b49f"/>
      <path d="M37 64C44 62 54 62 58 66L57 72C50 68 42 68 38 72Z" fill="#a07f6e"/>
      <!-- cap -->
      <path d="M21 56C21 42 31 36 41 37C51 38 56 46 57 56L60 62C50 60 40 62 30 66C25 64 21 62 21 56Z" fill="#4e372d"/>
      <path d="M32 64C42 58 54 58 62 62C58 69 46 69 38 71Z" fill="#54453f"/>
      <path d="M38 48C44 44 50 46 54 50" stroke="#a99282" stroke-width="1.2" fill="none"/>
      <!-- dog -->
      <path d="M58 84L60 77L66 84L74 81L82 80L78 90L80 100L86 112L84 126L74 128L64 116L58 104Z" fill="#c9b49d"/>
      <path d="M61 90C65 85 74 87 76 94C76 100 66 102 62 98Z" fill="#6b5343"/><circle cx="65.6" cy="93.6" r="1.7" fill="#111"/><path d="M64 99L70 101L66 104Z" fill="#efe6dc"/>
      <path d="M70 104C78 101 88 106 88 112C83 118 72 117 68 112Z" fill="#dcb6a0"/>
      <path d="M78 120C82 124 84 128 82 132" stroke="#e6dccf" stroke-width="3" fill="none"/>
      <!-- bag strap -->
      <path d="M2 152C2 136 8 130 14 136L20 152" stroke="#141414" stroke-width="3" fill="none"/>
    </g>
  </g>
</svg>
<div class="c" style="left:410.7px;top:504.6px;font-size:7.4px;font-weight:700;color:#1c1c1c">Відео 1</div>
<div class="c" style="left:585.6px;top:504.6px;font-size:7.4px;font-weight:700;color:#1c1c1c">Відео 2</div>
<!-- page scrollbar -->
<div style="left:859.6px;top:202.6px;width:2.4px;height:317.5px;background:#e1e29a"></div>
<div style="left:860px;top:218px;width:1.8px;height:173px;background:#26261c;border-radius:1px"></div>

<!-- ===== Windows 11 taskbar (inside shared screen) ===== -->
<div style="left:0;top:520.1px;width:862px;height:29.4px;background:#f1eff1"></div><div style="left:3px;top:520.1px;width:859px;height:28.5px;background:linear-gradient(90deg,#e4ebf0 0%,#e2eaf1 60%,#d7e7f4 100%)"></div>
<div style="left:8.2px;top:525.5px;width:105.6px;height:15.7px;border-radius:3px;background:#7f8284"></div>
<div class="l" id="nm" style="left:12px;top:533.8px;font-size:8.4px;color:#fafafa;letter-spacing:-0.3px">Соловйова Олена</div>
<div style="left:84px;top:533px;width:7px;height:1px;background:#b4b4b4"></div>
<div style="left:97px;top:533px;width:8px;height:1px;background:#e6e6e6"></div><div style="left:100.5px;top:529.5px;width:1px;height:8px;background:#e6e6e6"></div>
<svg class="ic" style="left:251.5px;top:527.5px" width="13" height="13" viewBox="0 0 13 13"><rect x="0" y="0" width="6" height="6" fill="#1e8fe0"/><rect x="7" y="0" width="6" height="6" fill="#2a9df0"/><rect x="0" y="7" width="6" height="6" fill="#1577c8"/><rect x="7" y="7" width="6" height="6" fill="#1e8fe0"/></svg>
<div style="left:273.2px;top:525.6px;width:121.2px;height:16.4px;border-radius:8.2px;background:#f7fafd"></div>
<svg class="ic" style="left:279.5px;top:530px" width="8" height="8" viewBox="0 0 8 8"><circle cx="3.2" cy="3.2" r="2.5" fill="none" stroke="#333" stroke-width="1.1"/><path d="M5.1 5.1L7.5 7.5" stroke="#333" stroke-width="1.2"/></svg>
<div class="l" style="left:292px;top:534px;font-size:8px;color:#5c5c5c;letter-spacing:-0.15px">Пошук</div>
<!-- copilot -->
<svg class="ic" style="left:402.2px;top:526.3px" width="13.7" height="13.7" viewBox="0 0 12 12"><path d="M3 1H7L5 6H1Z" fill="#3a8fe8"/><path d="M7 1H9.6C11 1 11.6 2.4 11 3.6L9 8L6 6Z" fill="#c95ad0"/><path d="M9 11H5L7 6H11Z" fill="#f0a43a"/><path d="M5 11H2.4C1 11 0.4 9.6 1 8.4L3 4L6 6Z" fill="#2fb9a8"/></svg>
<!-- edge -->
<svg class="ic" style="left:426.6px;top:526.3px" width="13.7" height="13.7" viewBox="0 0 12 12"><circle cx="6" cy="6" r="6" fill="#1b7fd1"/><path d="M1 7C1 3 4 1 7 1.2C10 1.6 11.6 4 11.6 6H5.4C5.4 8.6 8 10 10.6 8.8C9 11.4 6 12.2 3.4 10.8C1.8 9.8 1 8.4 1 7Z" fill="#3fd1a8"/><path d="M5.4 6C5.4 4.6 6.6 4 7.6 4.2C9 4.4 9.4 6 9.4 6Z" fill="#f4f8fb"/></svg>
<div style="left:431.4px;top:543.2px;width:4px;height:1.4px;border-radius:1px;background:#8a8f94"></div>
<!-- office -->
<svg class="ic" style="left:451.9px;top:525.8px" width="11.4" height="14.2" viewBox="0 0 10 12.5"><path d="M0.4 3L6.4 0.4L9.6 1.4V11.1L6.4 12.1L0.4 9.6L6.4 10.2V2.6L2.6 3.6V8.4L0.4 9.6Z" fill="#e2401c"/></svg>
<!-- folder -->
<svg class="ic" style="left:475.6px;top:527.4px" width="14.8" height="12.0" viewBox="0 0 13 10.5"><path d="M0 1.2C0 0.6 0.4 0.2 1 0.2H4.4L5.8 1.6H12C12.6 1.6 13 2 13 2.6V9.4C13 10 12.6 10.4 12 10.4H1C0.4 10.4 0 10 0 9.4Z" fill="#f2b52d"/><rect x="0" y="3.6" width="13" height="6.8" rx="0.8" fill="#fad565"/><rect x="3.6" y="7.4" width="5.8" height="3" fill="#3a8fd8"/></svg>
<!-- zoom -->
<svg class="ic" style="left:500.8px;top:526.3px" width="13.7" height="13.7" viewBox="0 0 12 12"><circle cx="6" cy="6" r="6" fill="#0b63e6"/><rect x="2.6" y="5" width="6.8" height="1.8" rx="0.6" fill="#dbe8fc"/></svg>
<!-- teams -->
<svg class="ic" style="left:523.9px;top:525.1px" width="18.2" height="16.0" viewBox="0 0 16 14"><circle cx="5.4" cy="4.2" r="2.2" fill="#5b5fc7"/><circle cx="10.4" cy="4.8" r="1.7" fill="#7b83eb"/><rect x="2" y="6.6" width="7" height="6.6" rx="1.2" fill="#4f52b2"/><rect x="8.6" y="7" width="4.8" height="5.6" rx="1.2" fill="#7b83eb"/><circle cx="12.6" cy="3.2" r="3.2" fill="#d9412f"/></svg>
<div style="left:530.4px;top:543.2px;width:4px;height:1.4px;border-radius:1px;background:#8a8f94"></div>
<!-- whatsapp -->
<svg class="ic" style="left:548.9px;top:524.7px" width="18.2" height="17.1" viewBox="0 0 16 15"><path d="M6.4 2.2A5.6 5.6 0 1 1 3.6 12.6L0.8 13.6L1.8 10.8A5.6 5.6 0 0 1 6.4 2.2Z" fill="#f6fbf8" stroke="#1fa855" stroke-width="1.3"/><path d="M4.4 5.6C4.4 8 6.6 10 8.8 10.2L9.4 9L8.2 8.2L7.6 8.8C6.8 8.4 6.2 7.8 5.8 7L6.4 6.4L5.6 5.2Z" fill="#1fa855"/><circle cx="12.4" cy="3.2" r="3.2" fill="#2a7fc8"/></svg>
<!-- chrome -->
<div style="left:570.4px;top:522.4px;width:22.4px;height:23px;border-radius:3px;background:#f2f6fa"></div>
<svg class="ic" style="left:573.7px;top:526.2px" width="14.1" height="14.1" viewBox="0 0 12 12"><circle cx="6" cy="6" r="6" fill="#e7453c"/><path d="M6 6L0.8 3A6 6 0 0 0 5.2 11.95Z" fill="#2ea44f"/><path d="M6 6L5.2 11.95A6 6 0 0 0 11.2 3H6Z" fill="#f7c325"/><circle cx="6" cy="6" r="2.8" fill="#fff"/><circle cx="6" cy="6" r="2.1" fill="#3f82ea"/></svg>
<div style="left:576.6px;top:543px;width:8.4px;height:1.8px;border-radius:1px;background:#2c8f88"></div>
<!-- viber -->
<svg class="ic" style="left:597.9px;top:524.7px" width="18.2" height="17.1" viewBox="0 0 16 15"><path d="M6.4 2.4C9.6 2.4 11.6 4.2 11.6 7C11.6 9.8 9.6 11.6 6.8 11.6L4.6 13.6V11.2C2.6 10.6 1.2 9.2 1.2 7C1.2 4.2 3.2 2.4 6.4 2.4Z" fill="#7a57c7"/><path d="M4.6 5.2C4.6 7.4 6.2 9 8.4 9.2L8.8 8.2L7.8 7.6L7.4 8C6.8 7.8 6.2 7.2 5.9 6.6L6.4 6.2L5.8 5Z" fill="#f3eefc"/><circle cx="12.4" cy="3.4" r="3.3" fill="#e8523c"/></svg>
<div style="left:605px;top:543.2px;width:4px;height:1.4px;border-radius:1px;background:#8a8f94"></div>
<div class="c" style="left:537.2px;top:528.2px;font-size:4.4px;font-weight:700;color:#fff">9+</div>
<div class="c" style="left:561.4px;top:527.6px;font-size:4.6px;font-weight:700;color:#fff">2</div>
<div class="c" style="left:610.8px;top:528.2px;font-size:4.4px;font-weight:700;color:#fff">9+</div>
<!-- win11 tray -->
<svg class="ic" style="left:683.6px;top:531.6px" width="7" height="4" viewBox="0 0 7 4"><path d="M0.5 3.5L3.5 0.7L6.5 3.5" fill="none" stroke="#333" stroke-width="1"/></svg>
<svg class="ic" style="left:699.5px;top:528.5px" width="10" height="10" viewBox="0 0 10 10"><path d="M1.4 5A3.6 3.6 0 0 1 8 3M8.6 5A3.6 3.6 0 0 1 2 7" fill="none" stroke="#444" stroke-width="1.2"/><circle cx="6.6" cy="7.4" r="2" fill="#2a6fd0"/></svg>
<div style="left:714.2px;top:522.4px;width:17.8px;height:22.2px;border-radius:2.5px;background:#1f6a79"></div>
<svg class="ic" style="left:719.6px;top:528px" width="7" height="11" viewBox="0 0 7 11"><rect x="2" y="0.4" width="3" height="6" rx="1.5" fill="#f4f8f9"/><path d="M0.6 4.8C0.6 6.8 2 7.8 3.5 7.8C5 7.8 6.4 6.8 6.4 4.8M3.5 7.8V10.2" fill="none" stroke="#f4f8f9" stroke-width="0.9"/></svg>
<div class="c" style="left:744px;top:534px;font-size:6.8px;color:#2a2a2a;letter-spacing:-0.1px">УКР</div>
<svg class="ic" style="left:760px;top:529.6px" width="10" height="8" viewBox="0 0 10 8"><path d="M0.6 3C3 0.6 7 0.6 9.4 3M2.2 4.6C3.8 3.2 6.2 3.2 7.8 4.6" fill="none" stroke="#333" stroke-width="1"/><circle cx="5" cy="6.4" r="1" fill="#333"/></svg>
<svg class="ic" style="left:774px;top:529.4px" width="9" height="8" viewBox="0 0 9 8"><path d="M0.4 2.8H2L4.2 0.8V7.2L2 5.2H0.4Z" fill="none" stroke="#333" stroke-width="0.8"/><path d="M5.6 2.4C6.4 3.2 6.4 4.8 5.6 5.6M7 1.2C8.4 2.6 8.4 5.4 7 6.8" fill="none" stroke="#333" stroke-width="0.8"/></svg>
<svg class="ic" style="left:787px;top:530px" width="10" height="7" viewBox="0 0 10 7"><rect x="0.5" y="1.6" width="8" height="4.8" rx="1" fill="#2a2a2a"/><rect x="8.8" y="3" width="1" height="2" fill="#2a2a2a"/><path d="M2 1.6L3.4 0H5.6L4.6 1.6Z" fill="#2a2a2a"/></svg>
<div class="r" style="left:837.6px;top:528.4px;font-size:6.9px;color:#262626;letter-spacing:-0.15px">15:16</div>
<div class="r" style="left:837.6px;top:537.8px;font-size:6.9px;color:#262626;letter-spacing:-0.15px">24.11.2025</div>
<svg class="ic" style="left:842.6px;top:529.6px" width="8" height="8.5" viewBox="0 0 8 8.5"><path d="M2 1V7.6H7V1" fill="none" stroke="#444" stroke-width="0.9"/><path d="M0.4 1H3M3.6 3.4H5.6M3.6 5.2H5.6" stroke="#444" stroke-width="0.8"/></svg>

<!-- ===== Windows 10 taskbar (outer) ===== -->
<div style="left:0;top:549.3px;width:1024px;height:26.7px;background:linear-gradient(180deg,rgba(20,0,8,0.42) 0%,rgba(20,0,8,0.18) 50%,rgba(20,0,8,0) 100%),linear-gradient(90deg,#741639 0%,#621433 20%,#4b1029 48%,#3f0e23 78%,#441027 100%)"></div>
<svg class="ic" style="left:10.6px;top:557.3px" width="10.8" height="10.8" viewBox="0 0 11 11"><path d="M0 1.6L4.6 1V5.1H0ZM5.4 0.9L11 0V5.1H5.4ZM0 5.9H4.6V10L0 9.4ZM5.4 5.9H11V11L5.4 10.1Z" fill="#fff"/></svg>
<svg class="ic" style="left:40.5px;top:554.5px" width="16" height="16" viewBox="0 0 16 16"><circle cx="9.6" cy="6.4" r="4.9" fill="none" stroke="#fff" stroke-width="1.7"/><path d="M6 10L1.2 14.8" stroke="#fff" stroke-width="2.2"/></svg>
<svg class="ic" style="left:72.5px;top:557px" width="13" height="11" viewBox="0 0 13 11"><rect x="2.6" y="2.6" width="6.2" height="5.8" fill="none" stroke="#d8c8d0" stroke-width="1"/><path d="M0.6 1V2.6M0.6 8.4V10M2.6 0.6H8.8M2.6 10.4H8.8M11.4 1V10M11.4 5.5H12.6" stroke="#d8c8d0" stroke-width="1"/></svg>
<div style="left:106px;top:554px;width:16.5px;height:16.5px;border-radius:2px;background:linear-gradient(135deg,#f6a43a,#d9741c)"></div>
<svg class="ic" style="left:109.5px;top:557.5px" width="9.5" height="9.5" viewBox="0 0 10 10"><circle cx="5" cy="5" r="3.6" fill="none" stroke="#fde4c2" stroke-width="1.3"/><circle cx="5" cy="5" r="1.3" fill="#fde4c2"/></svg>
<svg class="ic" style="left:139px;top:554.6px" width="15" height="15" viewBox="0 0 15 15"><circle cx="7.5" cy="7.5" r="6.3" fill="none" stroke="#e8283f" stroke-width="2.2"/><ellipse cx="7.5" cy="7.5" rx="2.6" ry="5" fill="none" stroke="#e8283f" stroke-width="1.3"/></svg>
<div style="left:134px;top:574.2px;width:26.5px;height:1.8px;background:#e9b4c8"></div>
<svg class="ic" style="left:172px;top:553.4px" width="18" height="17" viewBox="0 0 18 17"><circle cx="6.6" cy="4.2" r="2.7" fill="#5b5fc7"/><circle cx="12.4" cy="4.8" r="2.1" fill="#7b83eb"/><rect x="1.6" y="7.4" width="9" height="8.4" rx="1.5" fill="#4f52b2"/><rect x="10" y="7.8" width="6" height="7" rx="1.5" fill="#7b83eb"/><rect x="0.6" y="8.6" width="5.4" height="5.4" rx="0.8" fill="#3d3f9b"/><circle cx="11.4" cy="11.4" r="4" fill="#e8192c"/></svg>
<div style="left:167.5px;top:574.2px;width:26.5px;height:1.8px;background:#e9b4c8"></div>
<svg class="ic" style="left:205px;top:555.6px" width="16" height="13" viewBox="0 0 16 13"><path d="M0 1.4C0 0.8 0.4 0.4 1 0.4H5.4L7 2H15C15.6 2 16 2.4 16 3V11.8C16 12.4 15.6 12.8 15 12.8H1C0.4 12.8 0 12.4 0 11.8Z" fill="#f0b429"/><rect x="0" y="4.4" width="16" height="8.4" rx="0.8" fill="#fbd868"/><rect x="4" y="8" width="8" height="4.8" fill="#3a8fd8"/></svg>
<div style="left:200.5px;top:574.2px;width:26.5px;height:1.8px;background:#e9b4c8"></div>
<div style="left:231.5px;top:558px;width:29.5px;height:18px;background:#85295a"></div>
<div style="left:231.5px;top:574.2px;width:29.5px;height:1.8px;background:#f0bcd0"></div>
<div style="left:238px;top:553.6px;width:16.5px;height:16.5px;border-radius:2px;background:linear-gradient(135deg,#f39a3c,#d8692a)"></div>
<div style="left:242.6px;top:558.2px;width:7.4px;height:7.4px;border-radius:50%;background:#f6cbb0"></div>
<!-- win10 tray -->
<svg class="ic" style="left:842.6px;top:560px" width="8" height="5" viewBox="0 0 8 5"><path d="M0.6 4.4L4 1L7.4 4.4" fill="none" stroke="#f0e6ea" stroke-width="1"/></svg>
<svg class="ic" style="left:859.6px;top:556px" width="6" height="12" viewBox="0 0 6 12"><rect x="0.6" y="0.4" width="4.8" height="7.6" rx="0.8" fill="#f4eef0"/><path d="M3 8V11.6" stroke="#f4eef0" stroke-width="1.4"/></svg>
<svg class="ic" style="left:873px;top:558px" width="9" height="9" viewBox="0 0 9 9"><path d="M0.6 8.4A7.8 7.8 0 0 1 8.4 0.6M2.6 8.4A5.8 5.8 0 0 1 8.4 2.6M4.8 8.4A3.6 3.6 0 0 1 8.4 4.8" fill="none" stroke="#d9c8d0" stroke-width="0.9"/><circle cx="7.6" cy="7.6" r="0.9" fill="#d9c8d0"/></svg>
<svg class="ic" style="left:889.5px;top:558.6px" width="11" height="7.6" viewBox="0 0 11 7.6"><rect x="1.4" y="1.6" width="9" height="5.4" rx="0.6" fill="#f4eef0"/><rect x="0" y="3.2" width="1.4" height="2.2" fill="#f4eef0"/><path d="M3 1.6L4.6 0H7L5.8 1.6Z" fill="#f4eef0"/></svg>
<svg class="ic" style="left:905.6px;top:558px" width="10" height="9" viewBox="0 0 10 9"><path d="M0.5 3.2H2.2L4.6 1V8L2.2 5.8H0.5Z" fill="none" stroke="#f0e6ea" stroke-width="0.9"/><path d="M6 3C6.8 3.8 6.8 5.2 6 6M7.4 1.6C9 3.2 9 5.8 7.4 7.4" fill="none" stroke="#f0e6ea" stroke-width="0.9"/></svg>
<div class="c" style="left:930.6px;top:562.8px;font-size:7.4px;color:#f6f0f2;letter-spacing:-0.1px">УКР</div>
<div class="c" style="left:965.6px;top:557.2px;font-size:8px;color:#f8f2f4;letter-spacing:-0.3px">15:16</div>
<div class="c" style="left:965.6px;top:569px;font-size:8px;color:#f8f2f4;letter-spacing:-0.3px">24.11.2025</div>
<svg class="ic" style="left:996px;top:557px" width="12" height="12" viewBox="0 0 12 12"><path d="M0.8 0.8H11.2V8.6H8.4V11.2L5.8 8.6H0.8Z" fill="none" stroke="#f0e6ea" stroke-width="1.1"/></svg>

<!-- ===== Right panel: participants ===== -->
<div style="left:862px;top:61px;width:162px;height:488.4px;background:#f5f5f5"></div>
<!-- tile 1 -->
<div class="tile" style="left:863.8px;top:171.5px;background:linear-gradient(100deg,#f4eaf0 0%,#f1e4ef 55%,#e9e1f0 100%)"></div>
<svg class="ic" style="left:886.4px;top:183.9px" width="32" height="32" viewBox="0 0 32 32"><defs><clipPath id="a1"><circle cx="16" cy="16" r="16"/></clipPath></defs><g clip-path="url(#a1)" filter="url(#b1)"><rect width="32" height="32" fill="#1d1a1c"/><path d="M10 32V20C10 14 13 8 18 6C23 6 26 10 26 16V32Z" fill="#f1efee"/><circle cx="19" cy="9" r="6" fill="#f6f4f2"/><path d="M0 6C5 6 8 12 7 18C6 22 2 24 0 24Z" fill="#c9a48c"/><path d="M0 14C4 16 7 18 6 24H0Z" fill="#6b3f2c"/><path d="M14 14C18 18 20 24 17 30" stroke="#8a8a8a" stroke-width="0.8" fill="none"/><path d="M26 4L32 0V32H26C29 24 29 12 26 4Z" fill="#242022"/></g></svg>
<div class="mic" style="left:866.2px;top:210.8px"><svg class="ic" style="left:4.4px;top:2.6px" width="9" height="10.6" viewBox="0 0 9 10.6"><rect x="3" y="0.6" width="3" height="5.4" rx="1.5" fill="#e4e2e2"/><path d="M1.4 4.6C1.4 6.6 2.8 7.6 4.5 7.6C6.2 7.6 7.6 6.6 7.6 4.6M4.5 7.6V9.8" fill="none" stroke="#e4e2e2" stroke-width="0.8"/><path d="M0.8 0.8L8.2 9.6" stroke="#e4e2e2" stroke-width="0.8"/></svg></div>
<!-- tile 2 -->
<div class="tile" style="left:943.5px;top:171.5px;background:linear-gradient(100deg,#f5ecef 0%,#f3e9ea 50%,#efe6ec 100%)"></div>
<svg class="ic" style="left:966.7px;top:184.3px" width="32" height="32" viewBox="0 0 32 32"><defs><clipPath id="a2"><circle cx="16" cy="16" r="16"/></clipPath></defs><g clip-path="url(#a2)" filter="url(#b1)"><rect width="32" height="32" fill="#2f6b70"/><rect x="0" y="0" width="32" height="6" fill="#1f3d42"/><path d="M9 4H23V18H9Z" fill="#c9a37a"/><path d="M11 4H21V10H11Z" fill="#a97d55"/><path d="M7 18C10 14 22 14 25 18V32H7Z" fill="#c6c9c6"/><path d="M0 14H7V28H0Z" fill="#22353a"/><path d="M25 10H32V26H25Z" fill="#3b8a8f"/><rect x="9" y="14" width="14" height="2" fill="#5a4632"/></g></svg>
<div class="mic" style="left:946.2px;top:210.8px"><svg class="ic" style="left:4.4px;top:2.6px" width="9" height="10.6" viewBox="0 0 9 10.6"><rect x="3" y="0.6" width="3" height="5.4" rx="1.5" fill="#e4e2e2"/><path d="M1.4 4.6C1.4 6.6 2.8 7.6 4.5 7.6C6.2 7.6 7.6 6.6 7.6 4.6M4.5 7.6V9.8" fill="none" stroke="#e4e2e2" stroke-width="0.8"/><path d="M0.8 0.8L8.2 9.6" stroke="#e4e2e2" stroke-width="0.8"/></svg></div>
<!-- tile 3 -->
<div class="tile" style="left:863.8px;top:231.2px;background:linear-gradient(100deg,#ecf0f2 0%,#e6ecee 45%,#f1e9ea 100%)"></div>
<svg class="ic" style="left:886.4px;top:244.1px" width="32" height="32" viewBox="0 0 32 32"><defs><clipPath id="a3"><circle cx="16" cy="16" r="16"/></clipPath></defs><g clip-path="url(#a3)" filter="url(#b1)"><rect width="32" height="32" fill="#7f9299"/><path d="M0 0H32V10C24 6 12 8 0 16Z" fill="#2b3034"/><path d="M4 14C10 6 22 6 28 12C24 14 20 18 18 24C14 20 8 16 4 14Z" fill="#15171a"/><path d="M12 16C16 14 20 16 20 20C20 26 16 30 12 28C10 24 10 20 12 16Z" fill="#d9d2cc"/><path d="M10 18C8 24 10 30 14 32H6C4 26 6 20 10 18Z" fill="#1c1e22"/><path d="M20 22C24 22 30 26 32 32H18Z" fill="#aeb9bd"/><path d="M13 26L17 25" stroke="#b0463c" stroke-width="1.2"/></g></svg>
<div class="mic" style="left:866.2px;top:270.8px"><svg class="ic" style="left:4.4px;top:2.6px" width="9" height="10.6" viewBox="0 0 9 10.6"><rect x="3" y="0.6" width="3" height="5.4" rx="1.5" fill="#e4e2e2"/><path d="M1.4 4.6C1.4 6.6 2.8 7.6 4.5 7.6C6.2 7.6 7.6 6.6 7.6 4.6M4.5 7.6V9.8" fill="none" stroke="#e4e2e2" stroke-width="0.8"/><path d="M0.8 0.8L8.2 9.6" stroke="#e4e2e2" stroke-width="0.8"/></svg></div>
<!-- tile 4 : active speaker webcam -->
<div style="left:943.4px;top:231.4px;width:78px;height:57.4px;border-radius:4px;background:#6367cb"></div><div style="left:944.9px;top:232.9px;width:75px;height:54.4px;border-radius:3px;background:#e9e9f6"></div>
<svg class="ic" style="left:945.6px;top:233.6px" width="73.6" height="53" viewBox="0 0 72.8 52"><defs><clipPath id="w4"><rect width="72.8" height="52" rx="2"/></clipPath></defs><g clip-path="url(#w4)" filter="url(#b1)"><rect x="-4" y="-4" width="81" height="60" fill="#999ca1"/><rect x="-4" y="-4" width="50" height="16" fill="#717378"/><rect x="-4" y="12" width="44" height="44" fill="#9b9ea3"/><rect x="4" y="12" width="0.8" height="40" fill="#7f8287"/><rect x="62" y="-4" width="15" height="60" fill="#85888d"/><rect x="2" y="44" width="6" height="8" fill="#b39a55"/><path d="M14 52C20 42 34 36 44 36H68C72 40 72.8 46 72.8 52Z" fill="#6c6f78"/><path d="M30 44C38 40 50 42 56 48" stroke="#8f929a" stroke-width="1.4" fill="none"/><path d="M36 20C36 6 44 0 54 0C64 0 70 8 70 20C70 30 68 40 62 42H44C38 40 36 30 36 20Z" fill="#55433a"/><path d="M42 20C42 10 47 6 54 6C61 6 66 10 66 20C66 30 61 38 54 38C47 38 42 30 42 20Z" fill="#dbb6a4"/><path d="M42 18C44 8 50 4 54 4C60 4 65 8 66 18C62 12 58 9 54 9C50 9 45 12 42 18Z" fill="#5a463b"/><ellipse cx="54" cy="11" rx="6" ry="4" fill="#ead0c4"/><path d="M50 30.5H57" stroke="#9a5f5a" stroke-width="1.2"/><path d="M46.5 20.5H51M57 20.5H61.5" stroke="#5a4038" stroke-width="1.1"/></g></svg>
<!-- tile 5 -->
<div class="tile" style="left:863.8px;top:291.2px;background:linear-gradient(100deg,#f2eff4 0%,#f4f1f3 50%,#f0eef4 100%)"></div>
<svg class="ic" style="left:886.4px;top:304.3px" width="32" height="32" viewBox="0 0 32 32"><defs><clipPath id="a5"><circle cx="16" cy="16" r="16"/></clipPath></defs><g clip-path="url(#a5)" filter="url(#b1)"><rect width="32" height="32" fill="#2b2426"/><path d="M0 0H32V8C22 4 10 4 0 10Z" fill="#3b3134"/><path d="M9 14L11 8L15 12H19L23 8L24 14C26 18 25 24 22 28H11C8 24 7 18 9 14Z" fill="#c9a68a"/><path d="M12 18H15M19 18H22" stroke="#3a2a22" stroke-width="1.2"/><path d="M15.5 21L17 22.5L18.5 21Z" fill="#8a5a4a"/><path d="M6 26C10 24 24 24 28 28V32H6Z" fill="#b5907a"/><path d="M0 22C4 20 8 24 8 32H0Z" fill="#5b4a48"/><path d="M8 27C12 25 22 25 26 28V32H8Z" fill="#dcc6b8"/></g></svg>
<div class="mic" style="left:866.2px;top:330.9px"><svg class="ic" style="left:4.4px;top:2.6px" width="9" height="10.6" viewBox="0 0 9 10.6"><rect x="3" y="0.6" width="3" height="5.4" rx="1.5" fill="#e4e2e2"/><path d="M1.4 4.6C1.4 6.6 2.8 7.6 4.5 7.6C6.2 7.6 7.6 6.6 7.6 4.6M4.5 7.6V9.8" fill="none" stroke="#e4e2e2" stroke-width="0.8"/><path d="M0.8 0.8L8.2 9.6" stroke="#e4e2e2" stroke-width="0.8"/></svg></div>
<!-- tile 6 -->
<div class="tile" style="left:943.5px;top:291.2px;background:linear-gradient(100deg,#f6f1f1 0%,#f6f0ef 50%,#f3eef3 100%)"></div>
<div style="left:965.8px;top:304.2px;width:33px;height:32.6px;border-radius:50%;background:#e4e8df"></div>
<div class="c" style="left:982.4px;top:321px;font-size:12px;font-weight:700;color:#4d4d45;letter-spacing:-0.5px">ВБ</div>
<div class="mic" style="left:946.2px;top:330.9px"><svg class="ic" style="left:4.4px;top:2.6px" width="9" height="10.6" viewBox="0 0 9 10.6"><rect x="3" y="0.6" width="3" height="5.4" rx="1.5" fill="#e4e2e2"/><path d="M1.4 4.6C1.4 6.6 2.8 7.6 4.5 7.6C6.2 7.6 7.6 6.6 7.6 4.6M4.5 7.6V9.8" fill="none" stroke="#e4e2e2" stroke-width="0.8"/><path d="M0.8 0.8L8.2 9.6" stroke="#e4e2e2" stroke-width="0.8"/></svg></div>
<!-- big tile -->
<svg class="ic" style="left:863.6px;top:352.4px" width="157.6" height="86.6" viewBox="0 0 157.6 86.6"><defs><clipPath id="w7"><rect width="157.6" height="86.6" rx="3"/></clipPath><linearGradient id="wall" x1="0" x2="1"><stop offset="0" stop-color="#6d6d70"/><stop offset="0.2" stop-color="#8b8b8e"/><stop offset="0.45" stop-color="#a3a3a5"/><stop offset="0.75" stop-color="#a0a0a2"/><stop offset="0.84" stop-color="#8a8a8c"/><stop offset="1" stop-color="#6c6c6e"/></linearGradient></defs><g clip-path="url(#w7)"><rect width="157.6" height="86.6" fill="url(#wall)"/><g filter="url(#b1)">
<path d="M-4 -4H9L12 14L6 30L11 50L8 70L0 90H-4Z" fill="#5f5c5c"/><path d="M3 10L9 22L4 34L10 48L5 60" stroke="#8a8888" stroke-width="1.6" fill="none"/>
<rect x="132.5" y="-4" width="30" height="96" fill="#282527"/><path d="M149 38C154 34 162 38 162 48V82H151Z" fill="#5d574b"/>
<path d="M27 38C28 34 34 34 35 38V47H27Z" fill="#3a2a30"/><rect x="26.5" y="40" width="9" height="8" rx="2" fill="#8a3240"/><rect x="25" y="51" width="11" height="11" rx="2" fill="#5c673c"/><rect x="27" y="53" width="7" height="4" fill="#c9b98a"/>
<path d="M8 92C12 72 30 64 50 63H94C110 65 120 76 124 92Z" fill="#2e8763"/><path d="M20 92C24 80 34 72 46 68" stroke="#3f9a74" stroke-width="2" fill="none"/>
<path d="M61 60H84V70C80 77 66 77 61 70Z" fill="#cfa598"/>
<path d="M43 92C46 72 45 52 45 36C45 14 57 3 72 3C89 3 101 14 101 34C101 50 98 60 93 68L88 70L86 50H56L60 66L62 92Z" fill="#2f2220"/>
<path d="M52 42C52 28 60 22 72 22C84 22 92.5 28 92.5 42C92.5 56 84 66.5 72.5 66.5C61 66.5 52 56 52 42Z" fill="#dcb5aa"/>
<path d="M49 38C48 16 60 6 72 6C86 6 98 16 96 38C94 34 92 33 90 33C84 30 78 31 72 31C66 31 60 30 54 33C52 33 50 35 49 38Z" fill="#30211f"/>
<path d="M37 28C38 8 52 -3 69 -3C88 -3 100 8 100 26" stroke="#1b1b1d" stroke-width="5.5" fill="none"/>
<ellipse cx="41" cy="38" rx="6.8" ry="14" fill="#1b1b1d"/><ellipse cx="98.5" cy="36.5" rx="5.4" ry="14" fill="#1b1b1d"/>
<rect x="54.5" y="33.5" width="16" height="10.5" rx="3.5" fill="#dfbcb2" stroke="#2e2626" stroke-width="1.3"/><rect x="74.5" y="33.5" width="16" height="10.5" rx="3.5" fill="#dfbcb2" stroke="#2e2626" stroke-width="1.3"/><path d="M70.5 37.5H74.5" stroke="#2e2626" stroke-width="1.3"/>
<path d="M59 38.5H66M79 38.5H86" stroke="#5a4038" stroke-width="1.3"/>
<path d="M70 55.5C73 56.6 76 56.6 79 55.5" stroke="#a8625f" stroke-width="1.6" fill="none"/><path d="M73 48.5H76.5" stroke="#c4968a" stroke-width="1.2"/>
<path d="M46 56C44 68 45 80 43 92H60C59 82 59 70 55 60Z" fill="#33231f"/>
</g></g></svg>
<div class="mic" style="left:869.4px;top:418.6px;width:17px;height:15px;background:#4e4c4c"><svg class="ic" style="left:4.4px;top:2.6px" width="9" height="10.6" viewBox="0 0 9 10.6"><rect x="3" y="0.6" width="3" height="5.4" rx="1.5" fill="#e4e2e2"/><path d="M1.4 4.6C1.4 6.6 2.8 7.6 4.5 7.6C6.2 7.6 7.6 6.6 7.6 4.6M4.5 7.6V9.8" fill="none" stroke="#e4e2e2" stroke-width="0.8"/><path d="M0.8 0.8L8.2 9.6" stroke="#e4e2e2" stroke-width="0.8"/></svg></div>
</body>
</html>
